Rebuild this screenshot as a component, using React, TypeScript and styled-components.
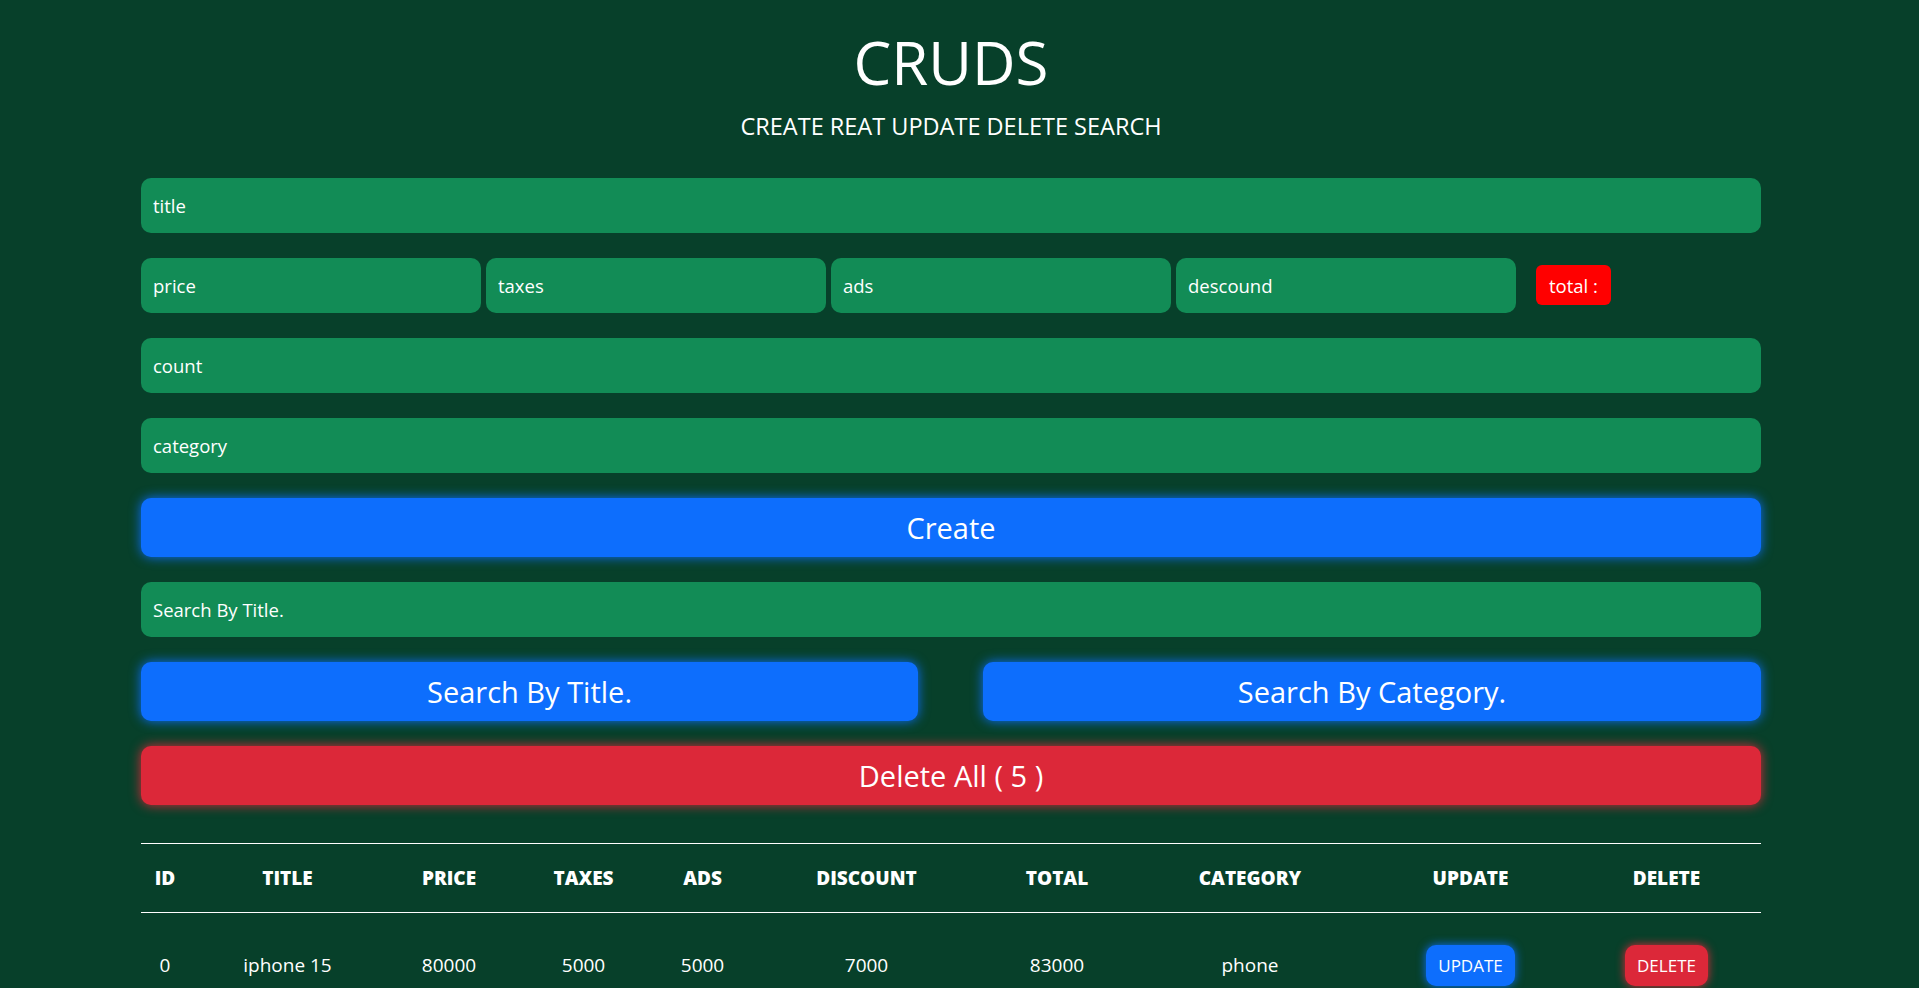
import React from "react";
import styled, { createGlobalStyle } from "styled-components";

const GlobalStyle = createGlobalStyle`
  :root {
    color-scheme: dark;
  }
  body {
    margin: 0;
    padding-right: 17px;
    background-color: #07402a;
    color: #ffffff;
    font-family: "Open Sans", "Noto Sans", sans-serif;
  }
`;

const Crud = styled.div`
  width: 1620px;
  margin: 0 auto;
  padding-bottom: 40px;
`;

const Head = styled.div`
  text-align: center;
  padding-top: 26px;
  > h1 {
    margin: 0;
    font-size: 60px;
    font-weight: 400;
    line-height: 1.2;
  }
  > h2 {
    margin: 12px 0 0;
    font-size: 23.5px;
    font-weight: 400;
    line-height: 1.4;
  }
`;

const Inputs = styled.div`
  display: flex;
  flex-direction: column;
  gap: 25px;
  margin-top: 35px;
`;

const Field = styled.input<{ $w?: string }>`
  box-sizing: border-box;
  width: ${(p) => p.$w || "100%"};
  height: 55px;
  padding: 0 12px;
  border: none;
  outline: none;
  border-radius: 10px;
  background-color: #128c56;
  color: #ffffff;
  font-family: "Open Sans", sans-serif;
  font-size: 18.5px;
  &::placeholder {
    color: #ffffff;
  }
`;

const PriceRow = styled.div`
  display: flex;
  align-items: center;
  gap: 5px;
`;

const Total = styled.small`
  margin-left: 15px;
  padding: 0 13px;
  height: 40px;
  display: flex;
  align-items: center;
  border-radius: 6px;
  background-color: #ff0000;
  font-size: 18.5px;
`;

const Button = styled.button<{ $danger?: boolean; $w?: string }>`
  width: ${(p) => p.$w || "100%"};
  height: 59px;
  border: none;
  border-radius: 10px;
  cursor: pointer;
  color: #ffffff;
  font-family: "Open Sans", sans-serif;
  font-size: 29px;
  background-color: ${(p) => (p.$danger ? "#dc2839" : "#0d6efd")};
  box-shadow: 0 0 12px ${(p) => (p.$danger ? "#dc2839" : "#0d6efd")};
`;

const SearchRow = styled.div`
  display: flex;
  justify-content: space-between;
`;

const Table = styled.table`
  width: 100%;
  margin-top: 38px;
  border-collapse: collapse;
  text-align: center;
  > thead tr {
    border-top: 1px solid #ffffff;
    border-bottom: 1px solid #ffffff;
  }
  th {
    height: 68px;
    padding: 0;
    font-size: 19px;
    font-weight: 800;
    text-transform: uppercase;
  }
  td {
    height: 105px;
    padding: 0;
    font-size: 19px;
  }
`;

const RowButton = styled.button<{ $danger?: boolean }>`
  height: 41px;
  padding: 0 12px;
  border: none;
  border-radius: 10px;
  cursor: pointer;
  color: #ffffff;
  font-family: "Open Sans", sans-serif;
  font-size: 17px;
  background-color: ${(p) => (p.$danger ? "#dc2839" : "#0d6efd")};
  box-shadow: 0 0 10px ${(p) => (p.$danger ? "#dc2839" : "#0d6efd")};
`;

const cols = [48, 197, 126, 143, 95, 233, 148, 238, 203, 189];
const heads = ["id", "title", "price", "taxes", "ads", "discount", "total", "category", "update", "delete"];

const products = [
  { title: "iphone 15", price: 80000, taxes: 5000, ads: 5000, discount: 7000, category: "phone" },
  { title: "iphone 14", price: 70000, taxes: 4000, ads: 3000, discount: 5000, category: "phone" },
  { title: "galaxy s24", price: 65000, taxes: 4000, ads: 2000, discount: 3000, category: "phone" },
  { title: "dell xps", price: 90000, taxes: 6000, ads: 4000, discount: 8000, category: "laptop" },
  { title: "ipad air", price: 45000, taxes: 3000, ads: 2000, discount: 2000, category: "tablet" },
];

function App() {
  return (
    <>
      <GlobalStyle />
      <Crud>
        <Head>
          <h1>CRUDS</h1>
          <h2>CREATE REAT UPDATE DELETE SEARCH</h2>
        </Head>
        <Inputs>
          <Field placeholder="title" />
          <PriceRow>
            <Field $w="340px" placeholder="price" />
            <Field $w="340px" placeholder="taxes" />
            <Field $w="340px" placeholder="ads" />
            <Field $w="340px" placeholder="descound" />
            <Total>total :</Total>
          </PriceRow>
          <Field placeholder="count" />
          <Field placeholder="category" />
          <Button>Create</Button>
          <Field placeholder="Search By Title." />
          <SearchRow>
            <Button $w="777px">Search By Title.</Button>
            <Button $w="778px">Search By Category.</Button>
          </SearchRow>
          <Button $danger>Delete All ( {products.length} )</Button>
        </Inputs>
        <Table>
          <colgroup>
            {cols.map((w, i) => (
              <col key={i} style={{ width: w }} />
            ))}
          </colgroup>
          <thead>
            <tr>
              {heads.map((h) => (
                <th key={h}>{h}</th>
              ))}
            </tr>
          </thead>
          <tbody>
            {products.map((p, i) => (
              <tr key={i}>
                <td>{i}</td>
                <td>{p.title}</td>
                <td>{p.price}</td>
                <td>{p.taxes}</td>
                <td>{p.ads}</td>
                <td>{p.discount}</td>
                <td>{p.price + p.taxes + p.ads - p.discount}</td>
                <td>{p.category}</td>
                <td>
                  <RowButton>UPDATE</RowButton>
                </td>
                <td>
                  <RowButton $danger>DELETE</RowButton>
                </td>
              </tr>
            ))}
          </tbody>
        </Table>
      </Crud>
    </>
  );
}

export default App;
